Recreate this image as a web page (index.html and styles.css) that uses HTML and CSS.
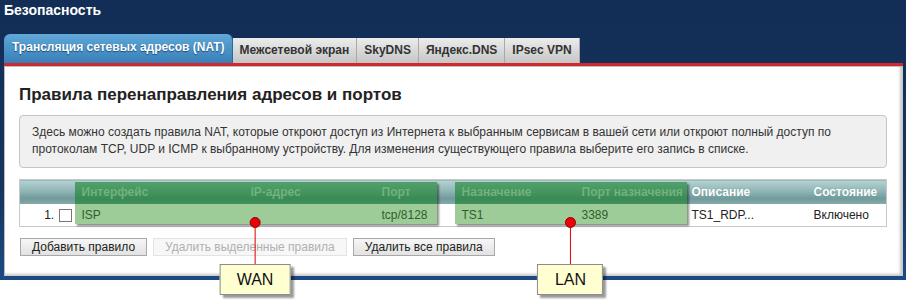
FILE: index.html
```html
<!DOCTYPE html>
<html lang="ru">

<head>
  <meta charset="UTF-8">
  <meta name="viewport" content="width=device-width, initial-scale=1.0">
  <title>Безопасность</title>
  <link rel="stylesheet" href="styles.css">
</head>

<body>
  <div class="frame">
    <div class="page-title">Безопасность</div>

    <div class="tabs">
      <div class="tab active">Трансляция сетевых адресов (NAT)</div>
      <div class="tab">Межсетевой экран</div>
      <div class="tab">SkyDNS</div>
      <div class="tab">Яндекс.DNS</div>
      <div class="tab">IPsec VPN</div>
    </div>
    <div class="tab-line"></div>

    <div class="panel">
      <h2>Правила перенаправления адресов и портов</h2>

      <div class="info">
        Здесь можно создать правила NAT, которые откроют доступ из Интернета к выбранным сервисам в вашей сети или откроют полный доступ по
        протоколам TCP, UDP и ICMP к выбранному устройству. Для изменения существующего правила выберите его запись в списке.
      </div>

      <div class="rules">
        <table class="rules-table">
          <colgroup>
            <col style="width: 56px">
            <col style="width: 169px">
            <col style="width: 131px">
            <col style="width: 80px">
            <col style="width: 120px">
            <col style="width: 110px">
            <col style="width: 122px">
            <col>
          </colgroup>
          <thead>
            <tr>
              <th></th>
              <th>Интерфейс</th>
              <th>IP-адрес</th>
              <th>Порт</th>
              <th>Назначение</th>
              <th>Порт назначения</th>
              <th>Описание</th>
              <th>Состояние</th>
            </tr>
          </thead>
          <tbody>
            <tr>
              <td class="num">1. <span class="check"></span></td>
              <td>ISP</td>
              <td></td>
              <td>tcp/8128</td>
              <td>TS1</td>
              <td>3389</td>
              <td>TS1_RDP...</td>
              <td>Включено</td>
            </tr>
          </tbody>
        </table>

        <div class="highlight wan-zone"><div class="hl-head"></div><div class="hl-body"></div></div>
        <div class="highlight lan-zone"><div class="hl-head"></div><div class="hl-body"></div></div>

        <div class="pin pin-wan">
          <div class="dot"></div>
          <div class="stem"></div>
          <div class="label">WAN</div>
        </div>
        <div class="pin pin-lan">
          <div class="dot"></div>
          <div class="stem"></div>
          <div class="label">LAN</div>
        </div>
      </div>

      <div class="actions">
        <button class="btn">Добавить правило</button>
        <button class="btn" disabled>Удалить выделенные правила</button>
        <button class="btn">Удалить все правила</button>
      </div>
    </div>
  </div>
</body>

</html>
```

FILE: styles.css
```css
html,
body {
  min-height: 302px;
}

body {
  margin: 0;
  background-color: #fff;
  font-family: 'Liberation Sans', Arial, sans-serif;
  color: #222;
}

.frame {
  background: linear-gradient(#122d56, #16365f 70%, #1c4a86);
  padding: 0 3px 4px 4px;
}

.page-title {
  color: #fff;
  font-weight: bold;
  font-size: 14px;
  line-height: 18px;
  padding-top: 1px;
  height: 33px;
}

.tabs {
  display: flex;
  align-items: flex-end;
  height: 29px;
}

.tab {
  height: 25px;
  line-height: 25px;
  padding: 0 7px;
  font-size: 12px;
  font-weight: bold;
  color: #333;
  background: linear-gradient(#ececec, #d9d9d9 50%, #c6c6c6);
  border-right: 1px solid #a9a9a9;
}

.tab.active {
  height: 29px;
  line-height: 27px;
  padding: 0 7px 0 8px;
  color: #fff;
  text-shadow: 0 1px 1px #1b4c7a;
  background: linear-gradient(#62a8d8, #4a93c8 50%, #3a7fb8);
  border-radius: 6px 6px 0 0;
  border-right: 1px solid #2d6a9c;
}

.tab-line {
  height: 3px;
  background-color: #d2282d;
  border-bottom: 1px solid #b9bcc2;
}

.panel {
  background-color: #fff;
  height: 209px;
  box-sizing: border-box;
  padding: 17px 15px 0 15px;
  box-shadow: inset -4px -3px 3px -1px #c8c8c8, inset 1px 0 0 #bbb;
}

h2 {
  margin: 0;
  font-size: 17px;
  line-height: 22px;
  color: #222;
}

.info {
  margin-top: 9px;
  width: 868px;
  box-sizing: border-box;
  padding: 8px 12px 9px 12px;
  font-size: 12px;
  line-height: 17px;
  color: #333;
  background-color: #f0f0f0;
  border: 1px solid #c6c6c6;
  border-radius: 4px;
}

.rules {
  position: relative;
  margin-top: 11px;
  width: 868px;
}

.rules-table {
  width: 868px;
  border-collapse: collapse;
  table-layout: fixed;
  font-size: 12px;
  border: 1px solid #c8c8c8;
}

.rules-table th {
  height: 24px;
  padding: 0 6px;
  text-align: left;
  white-space: nowrap;
  overflow: hidden;
  color: #fff;
  font-weight: bold;
  text-shadow: 0 0 1px #6d9090;
  background: linear-gradient(#b5d2d2, #8fb5b5 45%, #709a9a 75%, #86aaaa);
}

.rules-table td {
  height: 22px;
  padding: 0 6px;
  color: #222;
  white-space: nowrap;
}

.rules-table td.num {
  text-align: right;
  padding-right: 4px;
}

.check {
  display: inline-block;
  width: 11px;
  height: 11px;
  border: 1px solid #777;
  background-color: #fff;
  vertical-align: -3px;
  margin-left: 1px;
}

.highlight {
  position: absolute;
  top: 3px;
  height: 42px;
  display: flex;
  flex-direction: column;
  box-shadow: 2px 2px 2px rgba(0, 0, 0, 0.45);
}

.hl-head {
  height: 22px;
  background-color: rgba(20, 128, 40, 0.6);
}

.hl-body {
  flex: 1;
  background-color: rgba(60, 153, 50, 0.5);
}

.wan-zone {
  left: 56px;
  width: 362px;
}

.lan-zone {
  left: 436px;
  width: 232px;
}

.pin {
  position: absolute;
  top: 38px;
  display: flex;
  flex-direction: column;
  align-items: center;
  transform: translateX(-50%);
}

.pin-wan {
  left: 236px;
}

.pin-lan {
  left: 551px;
}

.dot {
  width: 9px;
  height: 9px;
  border-radius: 50%;
  background-color: #ee0008;
  border: 1px solid #8a0000;
}

.stem {
  width: 1px;
  height: 36px;
  background-color: #e00000;
}

.label {
  padding: 0 16px;
  height: 29px;
  line-height: 29px;
  font-size: 16px;
  color: #111;
  background-color: #ffffd2;
  border: 1px solid #8c8c8c;
  box-shadow: 3px 3px 2px rgba(0, 0, 0, 0.4);
}

.pin-lan .label {
  padding: 0 16px 0 17px;
}

.actions {
  display: flex;
  gap: 6px;
  margin-top: 11px;
  padding-left: 1px;
}

.btn {
  height: 18px;
  padding: 0 11px;
  font-family: inherit;
  font-size: 12px;
  color: #222;
  background: linear-gradient(#f6f6f6, #e2e2e2);
  border: 1px solid #a8a8a8;
  border-radius: 0;
}

.btn:disabled {
  color: #b0b0b0;
  background: #f7f7f7;
  border-color: #e3e3e3;
}
```
